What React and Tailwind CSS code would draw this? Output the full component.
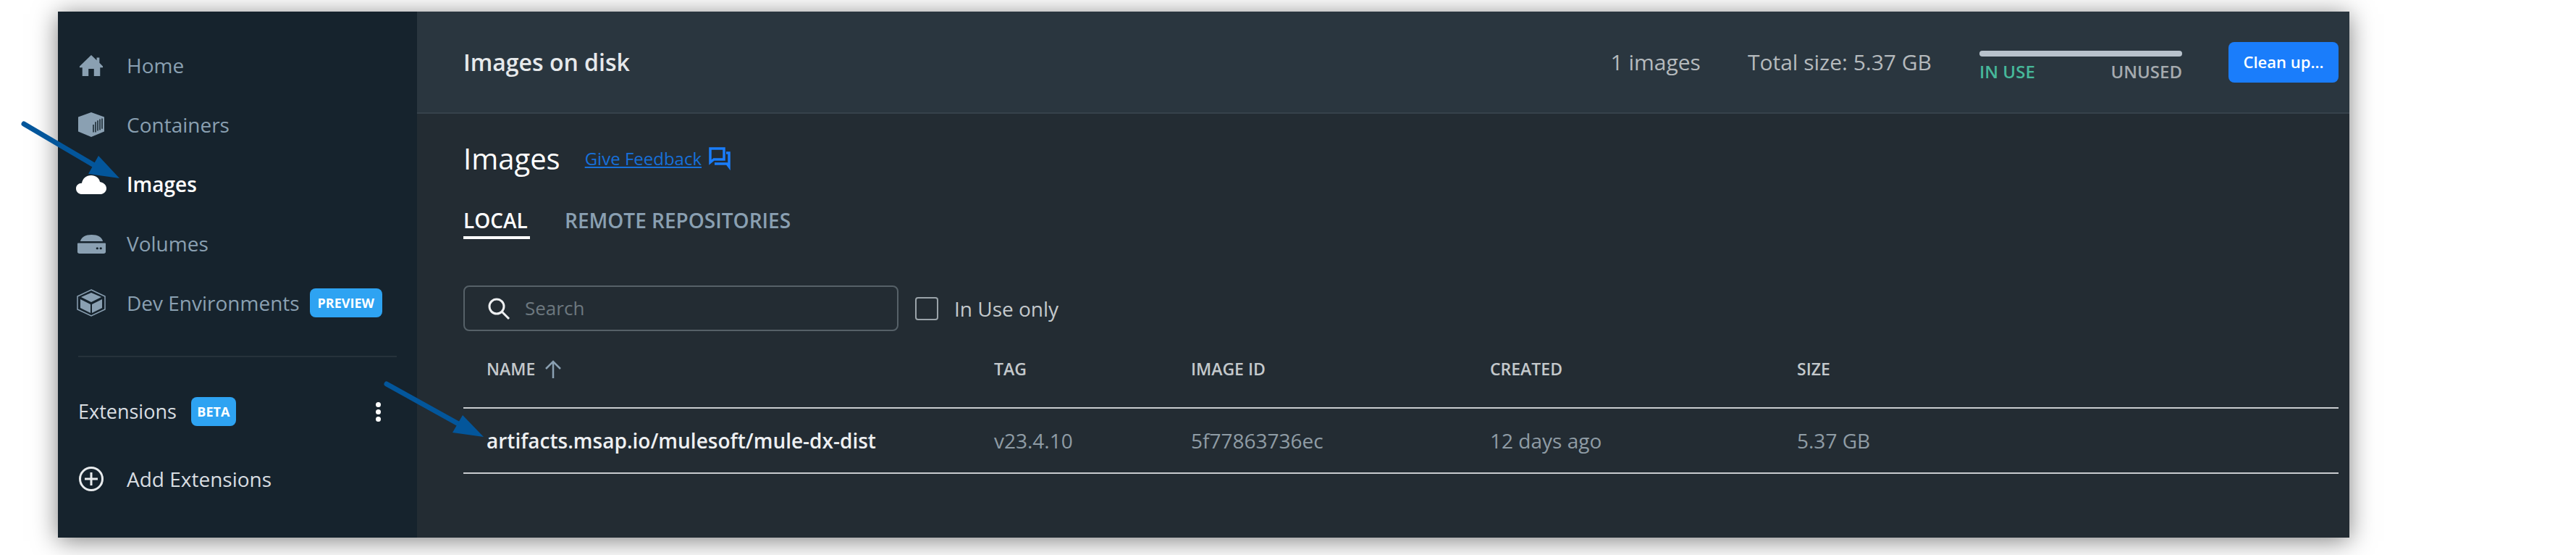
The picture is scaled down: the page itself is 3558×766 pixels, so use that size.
const Row = ({ icon, label, active, children }) => (
  <div className="flex h-[82px] items-center pl-6">
    <div className="mr-[27px] flex w-11 items-center justify-center">{icon}</div>
    <span className={`text-[28px] ${active ? "font-semibold text-white" : "text-[#8aa0b2]"}`}>{label}</span>
    {children}
  </div>
);

const Home = () => (
  <svg width="34" height="31" viewBox="0 0 36 34" preserveAspectRatio="none" fill="#8aa0b2"><path d="M18 1 L26 9 V5 H30 V13 L35 18 V20 H31 V33 H22 V22 H14 V33 H5 V20 H1 V18 Z" /></svg>
);
const Box = () => (
  <svg width="38" height="34" viewBox="0 0 38 36" preserveAspectRatio="none"><path d="M19 0 L37 7 V28 L19 36 L1 28 V7 Z" fill="#8aa0b2" /><path d="M22 29V18M25 29V14M28 27V12M31 26V10M34 24V9" stroke="#16232d" strokeWidth="1.5" /></svg>
);
const Cloud = () => (
  <svg width="42" height="27" viewBox="0 0 42 30" preserveAspectRatio="none" fill="#fff"><path d="M9 30 C3 30 0 26 0 21 C0 16 4 13 8 13 C9 6 14 1 21 1 C27 1 32 5 33 11 C38 12 42 16 42 21 C42 26 38 30 33 30 Z" /></svg>
);
const Volume = () => (
  <svg width="41" height="27" viewBox="0 0 42 30" preserveAspectRatio="none" fill="#8aa0b2"><path d="M5 11 C7 4 12 1 21 1 C30 1 35 4 37 11 Z" /><path d="M2 14 H40 Q41 14 41 15 V27 Q41 30 38 30 H4 Q1 30 1 27 V15 Q1 14 2 14 Z" /><circle cx="29" cy="22" r="1.7" fill="#16232d" /><circle cx="34" cy="22" r="1.7" fill="#16232d" /></svg>
);
const Dev = () => (
  <svg width="42" height="38" viewBox="0 0 42 38" fill="none"><path d="M21 1 L40 10 V28 L21 37 L2 28 V10 Z" stroke="#8aa0b2" strokeWidth="1.5" /><path d="M21 5 L35 11 L21 18 L7 11 Z" fill="#8aa0b2" /><path d="M6 14 L20 21 V33 L6 26 Z M36 14 L22 21 V33 L36 26 Z" fill="#8aa0b2" /></svg>
);
const Badge = ({ children, className }) => (
  <span className={`flex h-10 items-center justify-center rounded-lg bg-[#2ea3f2] text-[18px] font-bold text-white ${className}`}>{children}</span>
);

export default function App() {
  return (
    <div className="relative h-[766px] w-[3558px] overflow-hidden bg-white pl-20 pt-4 font-['Open_Sans',sans-serif]">
      <div className="flex h-[726px] w-[3165px] shadow-[0_4px_32px_rgba(0,0,0,0.5)]">
        <aside className="w-[496px] shrink-0 bg-[#16232d] pt-[33px]">
          <Row icon={<Home />} label="Home" />
          <Row icon={<Box />} label="Containers" />
          <Row icon={<Cloud />} label="Images" active />
          <Row icon={<Volume />} label="Volumes" />
          <Row icon={<Dev />} label="Dev Environments">
            <Badge className="ml-[14px] w-[100px]">PREVIEW</Badge>
          </Row>
          <div className="mx-7 mt-[32px] border-t-2 border-[#26323b]" />
          <div className="mt-[35px] flex h-[80px] items-center pl-7 pr-[50px] text-[27px] text-[#d9dee2]">
            <span>Extensions</span>
            <Badge className="ml-5 w-[62px]">BETA</Badge>
            <span className="ml-auto flex flex-col gap-[3px]">
              <i className="block size-[7px] rounded-full bg-white" />
              <i className="block size-[7px] rounded-full bg-white" />
              <i className="block size-[7px] rounded-full bg-white" />
            </span>
          </div>
          <div className="mt-[13px] flex h-[80px] items-center pl-7 text-[28px] text-[#d9dee2]">
            <svg className="mr-[31px]" width="36" height="36" viewBox="0 0 36 36" fill="none" stroke="#e8ebed" strokeWidth="3"><circle cx="18" cy="18" r="15.5" /><path d="M18 9V27M9 18H27" /></svg>
            Add Extensions
          </div>
        </aside>
        <main className="min-w-0 flex-1 bg-[#232c33]">
          <header className="flex h-[141px] items-center border-b-2 border-[#36424b] bg-[#2a363f] pl-16 pr-[15px] text-[30px] text-[#b5babd]">
            <h1 className="mr-auto text-[32px] font-semibold text-[#e6e9eb]">Images on disk</h1>
            <span>1 images</span>
            <span className="ml-[65px]">Total size: 5.37 GB</span>
            <div className="ml-[66px] w-[280px] pt-[13px]">
              <div className="h-2 rounded-sm bg-[#b8c2cc]" />
              <div className="mt-[5px] flex justify-between text-[24px] font-semibold leading-8">
                <span className="text-[#47b89a]">IN USE</span>
                <span className="text-[#a6abaf]">UNUSED</span>
              </div>
            </div>
            <button className="ml-16 h-14 w-[152px] rounded-lg bg-[#1a7dfb] text-[22px] font-semibold text-white">Clean up...</button>
          </header>
          <div className="pl-16 pr-[15px]">
            <div className="mt-[32px] flex h-[60px] items-center">
              <h2 className="text-[40px] font-medium text-white">Images</h2>
              <a className="ml-[34px] text-[24px] text-[#1770da] underline">Give Feedback</a>
              <svg className="ml-[10px]" width="30" height="32" viewBox="0 0 30 32" fill="none" stroke="#1a7dfb" strokeWidth="3.5"><path d="M2 2H21V17H7L2 21Z" /><path d="M8 23H25L28 27V8H24" /></svg>
            </div>
            <div className="mt-[28px] flex h-[53px] gap-[48px] text-[28px] font-semibold">
              <span className="h-[53px] w-[92px] whitespace-nowrap border-b-4 border-white leading-[54px] text-white">LOCAL</span>
              <span className="leading-[54px] text-[#8aa0b2]">REMOTE REPOSITORIES</span>
            </div>
            <div className="mt-[64px] flex items-center">
              <div className="flex h-[63px] w-[601px] items-center rounded-lg border-2 border-[#566168] pl-[31px]">
                <svg width="32" height="32" viewBox="0 0 32 32" fill="none" stroke="#eef0f2" strokeWidth="3"><circle cx="13" cy="13" r="10" /><path d="M20 20L30 30" /></svg>
                <span className="ml-[20px] text-[26px] text-[#6d787f]">Search</span>
              </div>
              <div className="ml-[23px] size-8 rounded border-2 border-[#9aa3a9]" />
              <span className="ml-[22px] text-[28px] text-[#c4c9cc]">In Use only</span>
            </div>
            <div className="grid h-[107px] grid-cols-[701px_272px_413px_424px_1fr] items-center border-b-2 border-[#c8cccf] pl-8 text-[23px] font-semibold text-[#c4c9cc]">
              <span className="flex items-center gap-3">NAME
                <svg width="26" height="26" viewBox="0 0 26 26" fill="none" stroke="#8aa0b2" strokeWidth="2.5"><path d="M13 25V2M3 12L13 2L23 12" /></svg>
              </span>
              <span>TAG</span><span>IMAGE ID</span><span>CREATED</span><span>SIZE</span>
            </div>
            <div className="grid h-[90px] grid-cols-[701px_272px_413px_424px_1fr] items-center border-b-2 border-[#c8cccf] pl-8 text-[28px] text-[#8f9ca5]">
              <span className="font-semibold text-[#eef0f2]">artifacts.msap.io/mulesoft/mule-dx-dist</span>
              <span>v23.4.10</span><span>5f77863736ec</span><span>12 days ago</span><span>5.37 GB</span>
            </div>
          </div>
        </main>
      </div>
      <svg className="absolute left-0 top-0" width="700" height="620" viewBox="0 0 700 620" fill="#03569b" stroke="none">
        <path d="M33 171L130 228" stroke="#03569b" strokeWidth="7" strokeLinecap="round" />
        <path d="M165 246L136 215L122 240Z" />
        <path d="M534 530L635 586" stroke="#03569b" strokeWidth="7" strokeLinecap="round" />
        <path d="M668 603L639 573L625 597Z" />
      </svg>
    </div>
  );
}
